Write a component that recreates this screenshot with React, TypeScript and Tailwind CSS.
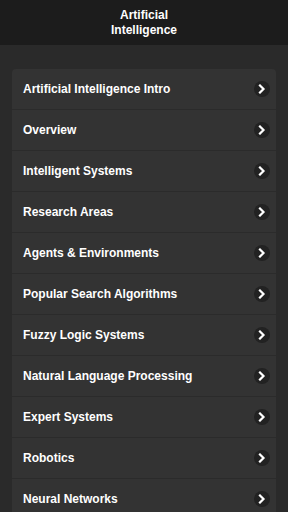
const topics = [
  'Artificial Intelligence Intro',
  'Overview',
  'Intelligent Systems',
  'Research Areas',
  'Agents & Environments',
  'Popular Search Algorithms',
  'Fuzzy Logic Systems',
  'Natural Language Processing',
  'Expert Systems',
  'Robotics',
  'Neural Networks',
];

const Chevron = () => (
  <span className="flex h-[16px] w-[16px] items-center justify-center rounded-full bg-[#222222]">
    <svg width="8" height="10" viewBox="0 0 8 10">
      <path d="M2 1.5 L5.5 5 L2 8.5" fill="none" stroke="#ffffff" strokeWidth="2.2" strokeLinecap="square" />
    </svg>
  </span>
);

const App = () => {
  return (
    <div className="h-[512px] w-[288px] overflow-hidden bg-[#2a2a2a] font-['Liberation_Sans',Arial,sans-serif]">
      <div className="flex h-[45px] items-center justify-center bg-[#1c1c1c] pt-[1px]">
        <h1 className="text-center text-[12px] font-bold leading-[15px] text-white">
          Artificial
          <br />
          Intelligence
        </h1>
      </div>

      <div className="px-[12px] pt-[24px]">
        <ul className="rounded-[4px] bg-[#333333]">
          {topics.map((t) => (
            <li
              key={t}
              className="flex h-[41px] items-center justify-between border-b border-[#2b2b2b] pl-[11px] pr-[6px]"
            >
              <span className="text-[12px] font-bold text-white">{t}</span>
              <Chevron />
            </li>
          ))}
        </ul>
      </div>
    </div>
  );
};

export default App;
